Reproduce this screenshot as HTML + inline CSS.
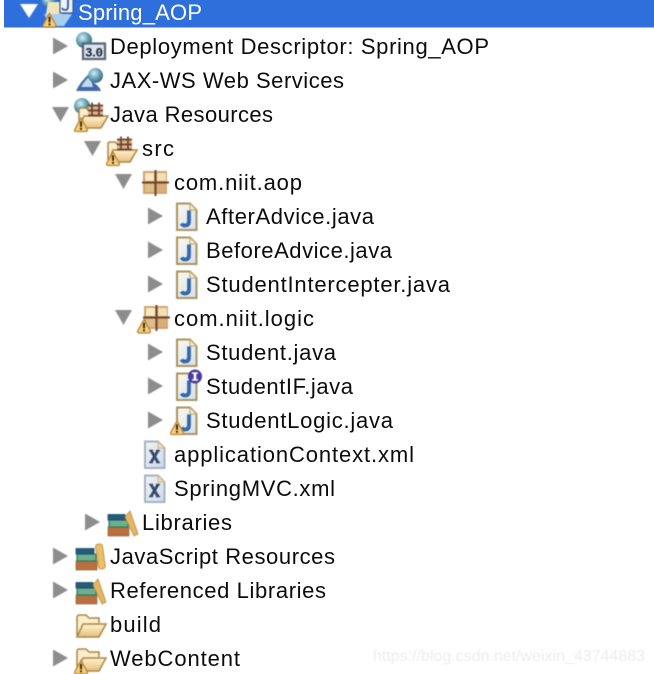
<!DOCTYPE html>
<html><head><meta charset="utf-8"><style>
html,body{margin:0;padding:0;background:#fff;width:654px;height:674px;overflow:hidden}
svg{display:block}
text{font-family:"Liberation Sans",sans-serif;font-size:22px;fill:#0c0c0c}
.ic{filter:blur(.45px)}
</style></head><body>
<svg width="654" height="674" viewBox="0 0 654 674" xmlns="http://www.w3.org/2000/svg">
<defs>
<linearGradient id="fg" x1="0" y1="0" x2="0" y2="1"><stop offset="0" stop-color="#fff3cf"/><stop offset="1" stop-color="#e6bf7c"/></linearGradient>
<linearGradient id="jg" x1="0" y1="0" x2="1" y2="1"><stop offset="0" stop-color="#fbf8ea"/><stop offset="1" stop-color="#d3e1f2"/></linearGradient>
<linearGradient id="xg" x1="0" y1="0" x2="1" y2="1"><stop offset="0" stop-color="#f3f3ef"/><stop offset="1" stop-color="#cdd9ea"/></linearGradient>
<radialGradient id="gl" cx=".4" cy=".35" r=".7"><stop offset="0" stop-color="#d8eef5"/><stop offset=".55" stop-color="#5f9fb4"/><stop offset="1" stop-color="#2f6070"/></radialGradient>
<g id="warn"><path d="M7 1 L13.400 12.600 Q13.800 14.500 12 14.500 H2 Q.2 14.500 .6 12.600Z" fill="#f4cf78" stroke="#b9853a" stroke-width="1.300"/><rect x="6" y="4.300" width="2" height="5.500" fill="#3d2a0c"/><rect x="6" y="10.800" width="2" height="2" fill="#3d2a0c"/></g>
<path id="tr" d="M0 0 L15 8.500 L0 17Z" fill="#8d8d8d"/>
<path id="td" d="M0 0 H17 L8.500 15Z" fill="#8d8d8d"/>
<g id="jf"><path d="M1 1 H14 L20.500 7.500 V27.500 H1Z" fill="url(#jg)" stroke="#ab945c" stroke-width="2"/><path d="M14 1 V7.500 H20.500Z" fill="#f5ebcd" stroke="#bda66e" stroke-width="1"/><path d="M13 8 V18.500 Q13 23 9 23 Q6.500 23 5.500 21" fill="none" stroke="#3566a8" stroke-width="3.800"/></g>
<g id="xf"><path d="M1 1 H14 L20.500 7.500 V27.500 H1Z" fill="url(#xg)" stroke="#a6b1c6" stroke-width="2"/><path d="M14 1 V7.500 H20.500Z" fill="#ecdcb4" stroke="#cdbb92" stroke-width="1"/><path d="M7 10 L14 22 M14 10 L7 22" stroke="#34486c" stroke-width="2.800" fill="none"/><path d="M5 10 H9 M12 10 H16 M5 22 H9 M12 22 H16" stroke="#34486c" stroke-width="1.400"/></g>
<g id="pk"><rect x="1" y="1" width="24" height="23" fill="#cfa372"/><rect x="3" y="3" width="9" height="8" fill="#f7e8c4"/><rect x="15" y="3" width="9" height="8" fill="#f3deb4"/><rect x="3" y="14" width="9" height="8" fill="#e0bd8a"/><rect x="15" y="14" width="9" height="8" fill="#d8ad7a"/><path d="M13.500 0 V26 M0 12.500 H27" stroke="#6f4630" stroke-width="2"/></g>
<g id="open"><path d="M1 24 V6 Q1 3 3 3 H10 L13 6 H23 V11" fill="#fbeecb" stroke="#a98649" stroke-width="1.500"/><path d="M1 25 L7 12 H30 L23 25Z" fill="url(#fg)" stroke="#a98649" stroke-width="1.500"/></g>
<g id="pf"><path d="M1 24 V8 Q1 6 3 6 H8 L10 8 H22 V14" fill="#fbeecb" stroke="#a98649" stroke-width="1.500"/><path d="M1 26 L6 14 H30 L23 26Z" fill="url(#fg)" stroke="#a98649" stroke-width="1.500"/><rect x="10" y="3" width="15" height="11" fill="#d8b68c"/><path d="M14 .5 V14 M21 .5 V14 M10 3.500 H25 M10 8.500 H25 M10 13.500 H25" stroke="#6a4030" stroke-width="1.700"/></g>
<g id="lib"><rect x="1" y="17" width="21" height="9" fill="#b96f3f" stroke="#8f5530" stroke-width=".6"/><rect x="2" y="10" width="19" height="7" fill="#6fb08c" stroke="#2f7a5c" stroke-width="1.200"/><rect x="1" y="4.500" width="17" height="5.500" fill="#235c7c" stroke="#1d4a66" stroke-width=".8"/><path d="M18 7 L23 1 L31 24 L27 26Z" fill="#e5b664" stroke="#b88838" stroke-width=".8"/></g>
<g id="libjs"><rect x="1" y="17" width="21" height="9" fill="#b96f3f" stroke="#8f5530" stroke-width=".6"/><rect x="2" y="10" width="19" height="7" fill="#6fb08c" stroke="#2f7a5c" stroke-width="1.200"/><rect x="1" y="4.500" width="18" height="5.500" fill="#235c7c" stroke="#1d4a66" stroke-width=".8"/><rect x="22" y="0" width="7" height="25" rx="2.500" fill="#e9bf68" stroke="#b88838" stroke-width=".8" transform="rotate(-8 25 13)"/></g>
<circle id="gb" cx="9" cy="9" r="8" fill="url(#gl)"/>
</defs>

<rect x="4" y="0" width="650" height="27.500" fill="#2f6fdb"/>

<g class="ic">
<path d="M20 4 H38 L29 18Z" fill="#fff"/>
<circle cx="49" cy="1" r="7" fill="url(#gl)"/>
<path d="M44 14 H72 L64 26 H50Z" fill="#a8cdee"/>
<path d="M46 14 H62 V2 H48Z" fill="#f1e4bd"/>
<rect x="60" y="-4" width="13" height="17" fill="#eef3fa" stroke="#39598a" stroke-width="1.200"/>
<path d="M68 -2 V7 Q68 10 65 10 Q63 10 62 8" fill="none" stroke="#34588e" stroke-width="1.800"/>
<use href="#warn" x="42.500" y="12.500"/>

<use href="#tr" x="53" y="37.500"/>
<use href="#gb" x="75" y="31"/>
<rect x="83" y="43.500" width="22" height="15.500" fill="#d9e4f0" stroke="#5a6575" stroke-width="2.200"/>
<text x="85" y="56.500" style="font:bold 12.500px 'Liberation Mono',monospace;fill:#141e2a" textLength="18">3.0</text>

<use href="#tr" x="53" y="71.500"/>
<path d="M76 91 Q80 82 90 73 L94 83 Q100 87 101 91Z" fill="#3f69a8"/>
<path d="M81 87 Q85 80 90 76 L93 87Z" fill="#c4d9ee"/>
<circle cx="95.500" cy="75.500" r="7.500" fill="url(#gl)"/>

<use href="#td" x="52" y="107"/>
<use href="#gb" x="73" y="97"/>
<use href="#pf" x="78" y="102"/>
<use href="#warn" x="74" y="117"/>

<use href="#td" x="84" y="141"/>
<use href="#pf" x="107" y="136"/>
<use href="#warn" x="106" y="151"/>

<use href="#td" x="115" y="174"/>
<use href="#pk" x="142" y="170"/>

<use href="#tr" x="148" y="207.500"/>
<use href="#jf" x="176" y="202.500"/>

<use href="#tr" x="148" y="241.500"/>
<use href="#jf" x="176" y="236.500"/>

<use href="#tr" x="148" y="275.500"/>
<use href="#jf" x="176" y="270.500"/>

<use href="#td" x="115" y="310"/>
<use href="#pk" x="143" y="305"/>
<use href="#warn" x="137" y="318.500"/>

<use href="#tr" x="148" y="343.500"/>
<use href="#jf" x="176" y="338.500"/>

<use href="#tr" x="148" y="377.500"/>
<use href="#jf" x="176" y="372.500"/>
<circle cx="195" cy="376.500" r="7" fill="#4a3a9c"/>
<rect x="193.700" y="373" width="2.600" height="7" fill="#fff"/>
<rect x="192" y="372.300" width="6" height="1.500" fill="#fff"/>
<rect x="192" y="379.200" width="6" height="1.500" fill="#fff"/>

<use href="#tr" x="148" y="411.500"/>
<use href="#jf" x="176" y="406.500"/>
<use href="#warn" x="170" y="420"/>

<use href="#xf" x="144" y="440.500"/>
<use href="#xf" x="144" y="474.500"/>

<use href="#tr" x="85" y="513.500"/>
<use href="#lib" x="107" y="510"/>

<use href="#tr" x="53" y="547.500"/>
<use href="#libjs" x="75" y="544"/>

<use href="#tr" x="53" y="581.500"/>
<use href="#lib" x="75" y="578"/>

<use href="#open" x="76" y="612"/>

<use href="#tr" x="53" y="649.500"/>
<use href="#open" x="76" y="646"/>
<use href="#warn" x="74" y="659.500"/>
</g>

<g>
<text x="78" y="20" textLength="124" style="fill:#fff">Spring_AOP</text>
<text x="110" y="54" textLength="379">Deployment Descriptor: Spring_AOP</text>
<text x="110" y="88" textLength="234">JAX-WS Web Services</text>
<text x="110" y="122" textLength="163">Java Resources</text>
<text x="142" y="156" textLength="32">src</text>
<text x="174" y="190" textLength="128">com.niit.aop</text>
<text x="206" y="224" textLength="168">AfterAdvice.java</text>
<text x="206" y="258" textLength="186">BeforeAdvice.java</text>
<text x="206" y="292" textLength="244">StudentIntercepter.java</text>
<text x="174" y="326" textLength="140">com.niit.logic</text>
<text x="206" y="360" textLength="130">Student.java</text>
<text x="206" y="394" textLength="147">StudentIF.java</text>
<text x="206" y="428" textLength="187">StudentLogic.java</text>
<text x="174" y="462" textLength="240">applicationContext.xml</text>
<text x="174" y="496" textLength="161">SpringMVC.xml</text>
<text x="142" y="530" textLength="90">Libraries</text>
<text x="110" y="564" textLength="225">JavaScript Resources</text>
<text x="110" y="598" textLength="216">Referenced Libraries</text>
<text x="110" y="632" textLength="51">build</text>
<text x="110" y="666" textLength="130">WebContent</text>
</g>
<text x="373" y="661" textLength="272" lengthAdjust="spacingAndGlyphs" style="font-size:16px;fill:#ececec;filter:blur(.5px)">https://blog.csdn.net/weixin_43744883</text>
</svg>
</body></html>
